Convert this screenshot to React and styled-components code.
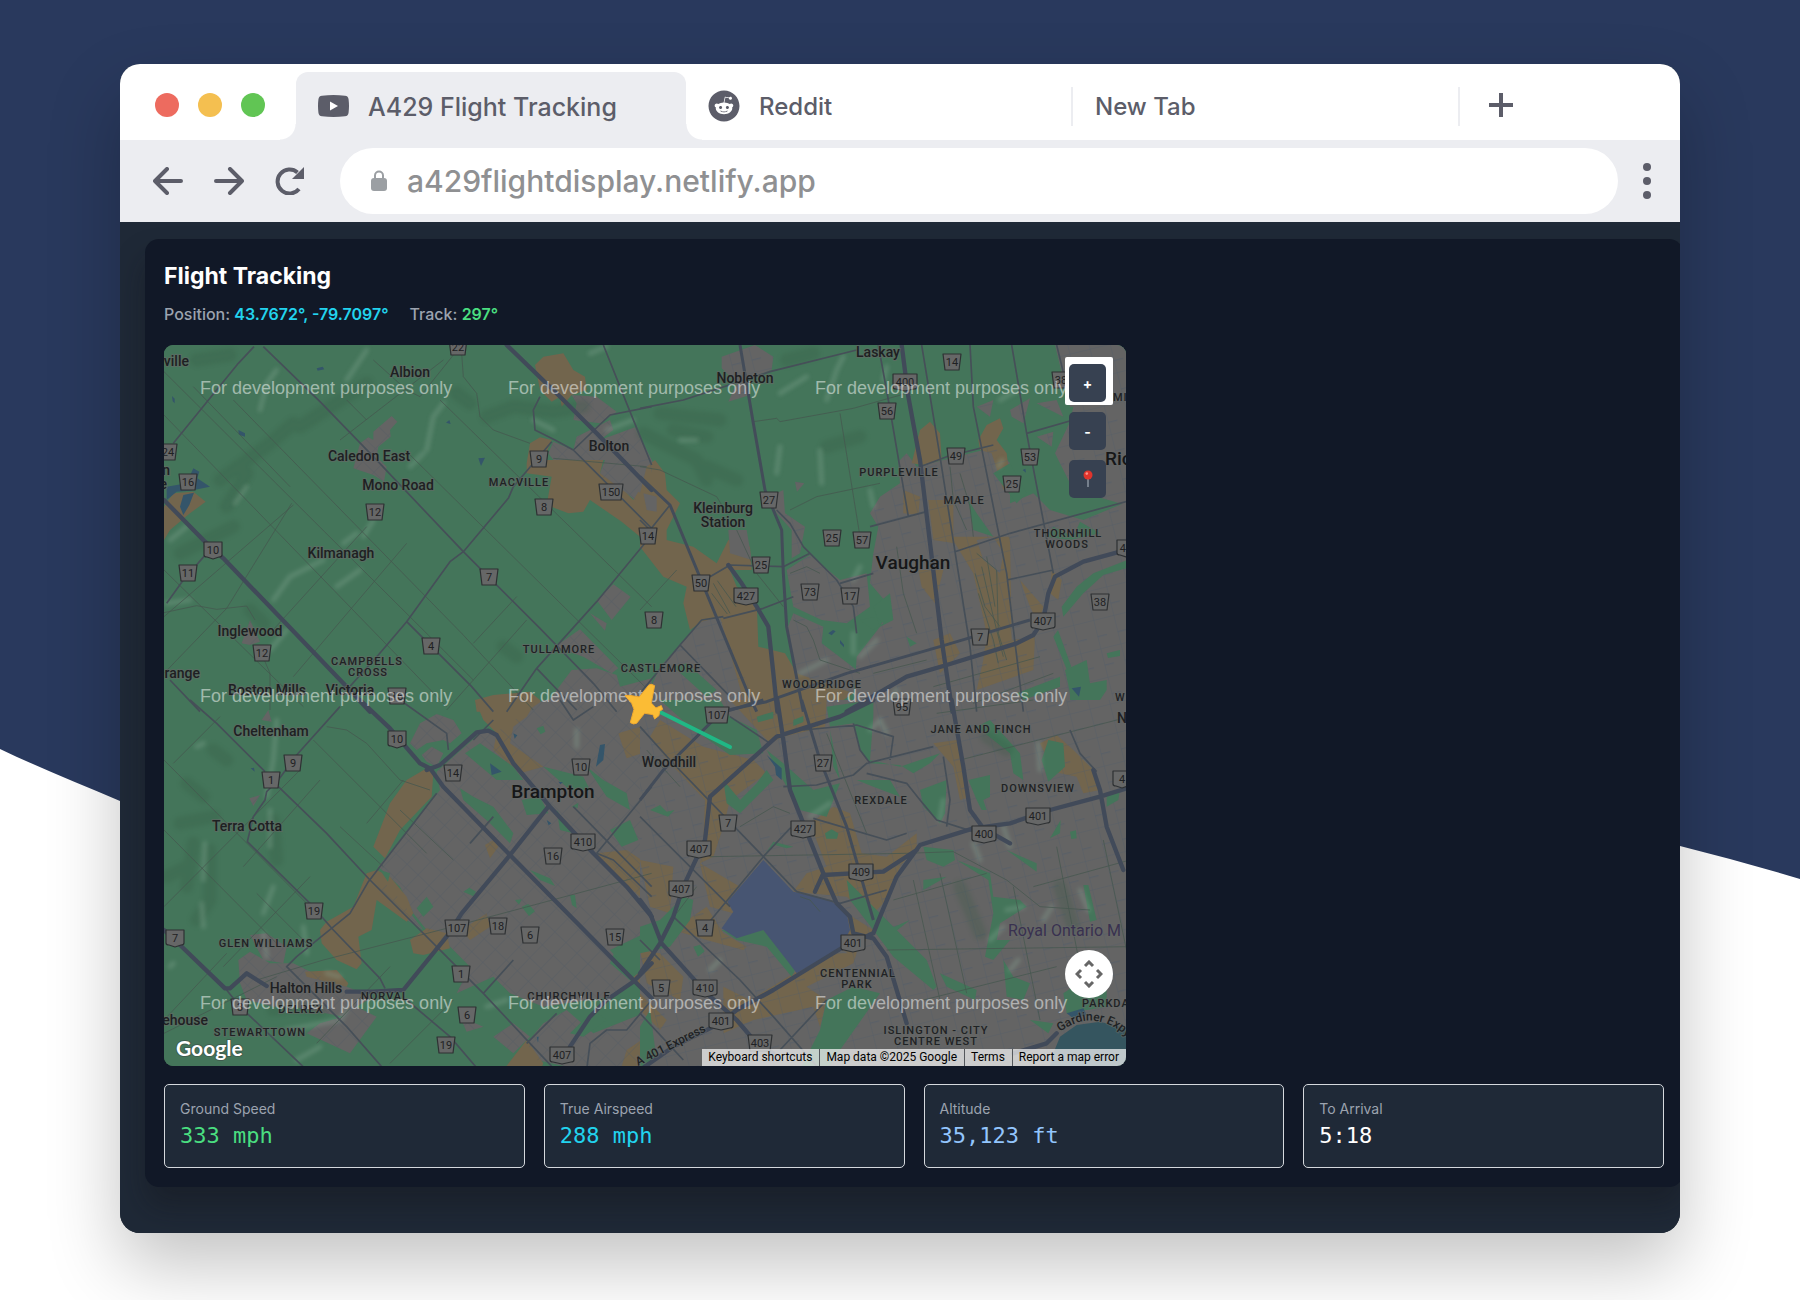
import React from "react";
import styled, { createGlobalStyle } from "styled-components";
import { FaReddit } from "react-icons/fa";

const GlobalStyle = createGlobalStyle`
  *, *::before, *::after { box-sizing: border-box; }
  body { margin: 0; background: #ffffff; font-family: Inter, "Liberation Sans", sans-serif; }
  button, input { font: inherit; border: 0; margin: 0; padding: 0; background: none; color: inherit; }
  h1, dl, dd, dt, p { margin: 0; }
`;

const ink = "#5c5d69";
const chrome = "#ecedf1";

/* ---------- page and window ---------- */

const Page = styled.div`
  position: relative;
  min-height: 100vh;
  padding: 64px 120px 66px;
  overflow: hidden;
`;

const Wave = styled.svg`
  position: absolute;
  inset: 0;
  width: 100%;
  height: 100%;
`;

const Window = styled.main`
  position: relative;
  border-radius: 20px;
  overflow: hidden;
  background: #1f2937;
  box-shadow: 0 32px 72px rgba(0, 0, 0, 0.24);
`;

const TabBar = styled.header`
  display: flex;
  align-items: flex-end;
  height: 76px;
  background: #ffffff;
`;

const Lights = styled.div`
  display: flex;
  align-self: center;
  gap: 19px;
  padding: 6px 31px 0 35px;
`;

const Light = styled.button`
  width: 24px;
  height: 24px;
  border-radius: 50%;
  background: ${(p) => p.$color};
`;

const Tabs = styled.div`
  display: flex;
  flex: 0 1 1164px;
  min-width: 0;
`;

const Tab = styled.button`
  position: relative;
  display: flex;
  align-items: center;
  gap: 19px;
  flex: 0 1 ${(p) => (p.$active ? "390px" : "387px")};
  height: 68px;
  padding: 0 22px;
  font-size: ${(p) => (p.$active ? "25px" : "24px")};
  font-weight: 500;
  line-height: 32px;
  white-space: nowrap;
  color: ${ink};
  background: ${(p) => (p.$active ? chrome : "transparent")};
  border-radius: 12px 12px 0 0;

  &::before {
    content: "";
    position: absolute;
    display: ${(p) => (p.$active ? "block" : "none")};
    left: -16px;
    right: -16px;
    bottom: 0;
    height: 16px;
    background:
      radial-gradient(circle at 0 0, transparent 15px, ${chrome} 16px) left / 16px 16px no-repeat,
      radial-gradient(circle at 100% 0, transparent 15px, ${chrome} 16px) right / 16px 16px no-repeat;
  }

  &::after {
    content: "";
    position: absolute;
    display: ${(p) => (p.$divided ? "block" : "none")};
    right: 0;
    top: 15px;
    width: 2px;
    height: 39px;
    background: ${chrome};
  }
`;

const TabTitle = styled.span`
  padding-top: 2px;
`;

const IconButton = styled.button`
  display: grid;
  place-items: center;
  flex: none;
  width: 30px;
  height: 36px;
  color: ${ink};
`;

const NewTabButton = styled(IconButton)`
  align-self: center;
  margin: 6px 0 0 26px;
`;

const Toolbar = styled.nav`
  display: flex;
  align-items: center;
  gap: 31px;
  height: 82px;
  padding: 0 18px 0 33px;
  background: ${chrome};
`;

const AddressGroup = styled.div`
  display: flex;
  align-items: center;
  flex: 1;
  gap: 14px;
  padding-left: 4px;
`;

const AddressBar = styled.label`
  display: flex;
  align-items: center;
  flex: 1;
  gap: 20px;
  height: 66px;
  padding: 0 31px;
  border-radius: 33px;
  background: #ffffff;
`;

const AddressInput = styled.input`
  flex: 1;
  min-width: 0;
  height: 40px;
  font-size: 30px;
  font-weight: 500;
  color: #8f9092;
  outline: none;
`;

/* ---------- flight panel ---------- */

const Viewport = styled.div`
  padding: 17px 0 46px 25px;
  background: #1f2937;
`;

const Panel = styled.section`
  margin-right: -3px;
  padding: 21px 19px 19px;
  border-radius: 14px;
  background: #111827;
  box-shadow: 0 20px 30px rgba(17, 17, 20, 0.35);
`;

const Title = styled.h1`
  font-size: 23px;
  line-height: 32px;
  font-weight: 700;
  color: #ffffff;
`;

const Readouts = styled.div`
  display: flex;
  gap: 21px;
  margin-top: 10px;
  font-size: 16px;
  font-weight: 500;
  line-height: 24px;
  color: #9ca3af;
`;

const Reading = styled.span`
  font-weight: 600;
  color: ${(p) => p.$color};
`;

const MapFrame = styled.div`
  position: relative;
  max-width: 962px;
  aspect-ratio: 962 / 721;
  margin-top: 19px;
  border-radius: 9px;
  overflow: hidden;
  background: #44755a;
`;

const MapDrawing = styled.svg`
  display: block;
  width: 100%;
  height: 100%;
`;

const ZoomStack = styled.div`
  position: absolute;
  top: 12px;
  right: 13px;
  display: flex;
  flex-direction: column;
  width: 48px;
`;

const ControlSlot = styled.div`
  height: 48px;
  padding: 7px 7px 3px 4px;
  border-radius: 2px;
  background: ${(p) => (p.$lit ? "#ffffff" : "transparent")};
`;

const MapButton = styled.button`
  display: grid;
  place-items: center;
  width: 37px;
  height: 38px;
  border-radius: 5px;
  background: #374151;
  color: #ffffff;
  font-size: 14px;
  font-weight: 700;
`;

const CameraButton = styled.button`
  position: absolute;
  right: 13px;
  bottom: 68px;
  display: grid;
  place-items: center;
  width: 48px;
  height: 48px;
  border-radius: 50%;
  background: #ffffff;
  color: #666666;
`;

const Attribution = styled.div`
  position: absolute;
  right: 0;
  bottom: 0;
  display: flex;
  height: 17px;
  font-family: Roboto, "Liberation Sans", sans-serif;
  font-size: 12px;
  line-height: 17px;
  color: #000000;
`;

const Credit = styled.a`
  padding: 0 7px 0 6px;
  white-space: nowrap;
  color: inherit;
  text-decoration: none;
  background: rgba(245, 245, 245, 0.72);

  & + & { border-left: 1px solid #55585c; }
`;

const Stats = styled.dl`
  display: grid;
  grid-template-columns: repeat(4, 1fr);
  gap: 19px;
  margin-top: 18px;
`;

const Stat = styled.div`
  min-height: 84px;
  padding: 14px 15px;
  border: 1px solid #d5d8dd;
  border-radius: 5px;
  background: #1f2937;
`;

const StatLabel = styled.dt`
  font-size: 14px;
  line-height: 20px;
  color: #9ca3af;
`;

const StatValue = styled.dd`
  margin-top: 3px;
  font-family: "DejaVu Sans Mono", monospace;
  font-size: 22px;
  line-height: 28px;
  color: ${(p) => p.$color};
`;

/* ---------- map data: the map is drawn as four tiles at triple scale ---------- */

const tiles = [
  {
    at: [-4, -5],
    grid: "url(#gridWest)",
    urban: [
      "M580 385L600 310L625 292L640 300V275L695 228L712 245L690 270L692 290L655 320L650 350L680 380L672 425L640 405Z",
      "M1235 165L1310 170L1370 215L1320 250L1240 240L1250 190Z",
      "M1250 290L1350 240L1360 270L1320 300L1425 262L1475 370V480L1450 455L1425 480L1400 460L1340 440L1320 400L1335 360H1180L1165 340L1180 305L1240 330Z",
      "M1310 780L1360 733L1412 770L1355 840Z", "M1290 820L1340 850L1335 872Z",
      "M1185 920L1260 868L1375 985L1355 1000L1270 950Z",
      "M1145 1110L1235 990L1310 985L1370 1005L1380 1040L1475 1015V1115Z",
      "M245 910L270 840L300 905L270 915Z",
    ],
    industry: [
      "M1125 75L1150 50L1210 40L1240 90L1275 110L1280 150L1235 165L1205 200L1200 170L1175 185L1140 150Z",
      "M1100 370L1110 310L1140 292L1175 300L1150 360H1330L1320 400L1400 460L1420 480L1435 455L1475 480V650L1440 590L1385 545L1290 480L1270 515L1225 520L1160 495L1175 410L1100 400Z",
      "M12 600V500L40 460L100 455L137 485L90 520L30 570Z",
      "M945 1080L1000 1065L1110 1055L1140 1080L1145 1115H950Z",
    ],
    parks: [],
    water: [
      "M20 440L80 430L100 385L118 395L112 415L150 440L90 452L50 455L20 480Z", "M60 500L70 465L102 458L88 495L70 525Z",
      "M470 85l18-5 5 8-20 4z", "M235 270l20 10v10l-18-6z", "M955 355l20-2-12 25z", "M36 168l8 8 0 14-6-6z", "M858 248l10-8 4 12z",
    ],
    relief: [
      "M300 210L320 130L350 90", "M800 330L820 230L850 190", "M340 780L390 710L490 660", "M530 740L600 690", "M610 590L640 540",
      "M560 120L620 30", "M1120 240L1180 270", "M1340 270L1420 240", "M20 790L90 780", "M330 930L380 870", "M225 490L260 440",
      "M1290 40L1340 20", "M750 380L790 340", "M30 600L80 560", "M550 610L590 580",
    ],
    shade: [
      "M980 230L1060 200L1180 215L1270 200", "M180 420L330 310L400 250", "M200 500L260 400", "M110 60L210 45", "M420 260L620 130",
      "M60 640L220 560", "M270 810L310 850", "M890 160L930 190", "M1030 920L1070 950",
    ],
    highways: ["M12 480L135 605L190 655L560 1040L630 1115", "M1040 15L1195 165L1310 280L1475 450"],
    roads: [
      "M310 20L480 185L640 350L910 635L990 715L1140 865L1300 1030L1370 1115", "M282 20L235 70L40 310",
      "M1175 305L1060 440L1045 475L910 635L870 665L740 845L655 945L560 1050", "M740 845L935 1040L1000 1115",
      "M1140 170L1120 210L1125 270L1185 300L1240 330L1320 410L1475 565", "M1240 330L1350 225L1475 200", "M1330 15L1400 190L1475 375",
      "M1475 585L1310 785L1130 985L1040 1115", "M20 790L70 720L140 640", "M30 1020L120 1115", "M1130 985L1250 1110",
    ],
    lanes: [
      "M12 225L860 1100", "M12 95L940 1020", "M220 180L905 880L1120 1110", "M560 180L620 240M735 330L1475 1060", "M840 180L1475 800",
      "M12 690L430 1100", "M12 830L400 495", "M200 805L395 490", "M400 1010L740 610", "M330 880L620 560", "M12 1000L200 805",
      "M540 300L850 60", "M940 910L1070 770", "M860 1110L1100 840", "M640 60L740 150L780 170L900 20", "M905 40L910 110L950 160L960 230L1000 270L1110 310",
      "M12 818L110 797L170 808L260 798L285 840", "M1180 355L1460 380", "M300 930L330 1000V1110", "M100 140L390 440",
    ],
  },
  {
    at: [476, -5],
    grid: "url(#gridEast)",
    urban: [
      "M690 520L720 470L780 430L775 365L800 340L830 380L1030 330L1060 310L1110 370V490L1180 460L1230 510L1330 540L1475 480V1115H640L650 950L720 860L750 800L690 730L700 640L715 560Z",
      "M1245 340L1290 245L1300 200L1475 190V500L1300 450Z", "M1245 15H1475V200H1290Z",
      "M245 50L345 15L400 50L395 90L310 120L330 165L265 185L290 130L245 85Z",
      "M1110 210L1170 175L1150 250L1115 230Z", "M1190 190L1250 180L1270 230Z", "M1010 200L1060 180L1050 230Z", "M1190 290L1240 275L1235 320Z",
      "M385 470L430 450L435 520L495 560L480 640L455 655V570L410 520Z",
      "M440 690L510 645L600 720L680 700L690 800L620 850L545 840L460 800Z", "M465 425l28 5-22 25z",
      "M440 870L460 820L550 860L545 910L650 990L640 1060L470 1010Z",
      "M0 290L40 370L30 430L0 410Z", "M0 1115L60 980L120 915L185 840L240 830L330 1050V1115Z",
    ],
    industry: [
      "M0 460L20 380L45 360L75 400L80 450L120 490L80 570V600L160 620L230 670L265 600L330 620L335 690L270 690L290 740L350 780L355 920L435 940L470 1000L640 1060L560 1115H320L240 830L185 845L150 870L130 790L140 740L70 710L0 620Z",
      "M815 370L840 270L870 245L900 280L905 360L850 375Z",
      "M1015 300L1040 255L1080 235L1090 265L1070 300L1100 340L1110 420L1090 450L1055 340L1020 330Z",
      "M865 480L940 480V590L1020 590L1110 590L1115 900L1185 890L1180 990L1010 1050L1030 960L1040 880L1000 700L945 610L880 600Z",
      "M835 690L910 690L885 790L845 740Z", "M880 900L930 880L960 940L900 1000Z", "M1235 690L1265 720L1255 780L1230 760Z",
      "M1140 720L1210 800L1195 850L1170 800Z", "M790 450L840 470L835 525L790 520Z",
    ],
    urbanOver: ["M10 460L50 470L50 515L20 510Z", "M265 570L320 570L335 660L270 640Z", "M1010 600L1060 590L1090 640L1080 700L1030 660Z"],
    parks: [
      "M1275 990L1340 960L1350 1030L1400 1020V1050L1360 1110H1290V1060Z", "M1265 800L1310 740L1360 700L1475 655V680L1390 705L1330 760L1270 830Z",
      "M1240 890l14-20 40 110-14 8z", "M985 480L1010 520L1060 590L1000 570Z", "M1240 560L1300 590L1320 545L1380 580L1290 600L1220 590Z",
      "M700 800l20 60 40-20-10-80z", "M800 890l30 20-20 10z", "M1130 1060L1260 1010V1040L1150 1080Z", "M100 980L140 970L230 1050L200 1070Z",
      "M1400 940l40-10v18l-36 6z", "M660 840L710 830L730 850L700 870Z", "M1110 370L1160 460L1130 490L1060 400Z",
    ],
    water: ["M565 880l14-10 8 4-12 12z", "M1295 1045l28-5-6 30z", "M600 900l12 14 0 8-12-12z", "M1148 390l8-4 2 12z"],
    relief: [
      "M560 180L590 90L610 50", "M420 320L410 400", "M540 330L545 430", "M420 160L500 110", "M640 720L660 680", "M640 940L640 880",
      "M660 950L710 900", "M480 1000L560 960", "M690 450L700 500", "M730 120L740 80", "M1080 180L1130 150", "M120 300L170 300",
      "M740 1100L770 1050", "M1075 380l12-18",
    ],
    shade: ["M10 280L90 320L170 360L200 420", "M60 220L240 240", "M200 380L290 420", "M440 60L520 40", "M100 270L200 290", "M560 320L660 290"],
    highways: [
      "M785 15L805 170L840 360L875 650L905 900L937 1115", "M265 675L305 730L350 800L385 860L400 1000L412 1115",
      "M1475 625L1330 665L1245 710L1225 760L1210 840L1180 885L1130 910L920 975L800 1010L620 1115",
    ],
    arterials: [
      "M0 410L90 495L320 1050L350 1115", "M300 15L340 250L375 450L400 510L425 570L430 700L440 860L490 1115",
      "M240 1115L380 1085L620 1000L900 920L1170 840",
    ],
    roads: [
      "M845 15L900 350L990 920L1010 1115", "M715 15L745 180L805 530", "M990 15L1000 200L1040 400L1100 700L1150 1115", "M1115 15L1160 280L1240 700",
      "M1250 15L1290 180", "M0 205L130 180L390 95L650 30", "M945 635L1110 580L1475 480", "M840 380L920 350L1060 315",
      "M410 510L450 550L490 620L590 720L640 800L650 880", "M210 710L270 675L430 680L510 640", "M250 835L370 805L460 770", "M600 730L700 700",
      "M1160 280L1300 240", "M0 1060L120 915L185 840L250 830", "M1100 720L1240 690", "M120 915L270 1070", "M0 540L30 570M30 570L90 495", "M690 560L860 515",
    ],
    lanes: [
      "M340 245L410 235L420 245L640 205L800 160", "M0 380L60 390L230 470L260 520", "M450 510L530 470L720 430", "M600 220L660 590",
      "M290 570L350 700L430 800", "M0 810L110 690", "M220 730L270 820M232 722L288 800M215 760L262 822",
      "M1010 640L1070 690L1075 880L1100 960M1025 680L1060 830L1090 950M1005 700L1035 800L1080 860M1040 650L1065 800M1015 760L1060 900L1075 970",
      "M460 840L500 860L520 900L540 960L660 1000", "M450 700L500 680L540 700", "M700 1000L860 960M880 1040L1200 950M1000 1090L1240 1000",
      "M930 380L940 480L980 570", "M960 400L990 500L1000 590", "M770 620L790 760L830 880",
    ],
  },
  {
    at: [-4, 355],
    grid: "url(#gridWest)",
    urban: [
      "M750 130L780 70L830 42L880 60L905 100L870 130L850 120L800 130L770 150Z",
      "M655 500L840 270L830 215L960 100L1010 95L1150 0H1475V700L1370 740L1350 790L1420 850L1350 890L1150 920L1050 880L1000 830L890 880L930 800L860 730L800 690L760 640L720 560Z",
      "M635 535L690 560L790 690L740 660Z", "M785 165L815 140L850 160L830 200L800 185Z",
      "M235 780L270 755L330 790L400 790L440 810L560 860L640 890L590 920L650 950L570 1060L440 1000L480 970L550 950L400 920L340 920L260 900L240 850Z",
      "M270 705L320 700L380 740L370 790L310 780Z", "M305 60L325 30L335 65Z", "M268 295L300 285L280 318Z",
      "M1150 970L1220 930L1300 1000L1475 930V1115H1290L1130 1080L1100 1030Z", "M1000 1010L1060 970L1110 1010L1060 1060Z", "M900 950L970 980L920 995Z",
    ],
    industry: [
      "M640 440L690 310L740 240L800 205L820 220L815 290L720 390L675 475Z",
      "M480 690L500 665L580 620L620 520L650 510L690 530L740 590L760 640L740 665L650 600L635 690L595 710L605 790L590 808L530 780L485 730Z",
      "M750 720L800 685L860 700L870 745L790 765L760 760Z", "M905 690L980 640L990 680L930 720Z",
      "M945 0H1130L1100 50L1060 80L1050 130L1150 200L1080 220L1000 150L1010 100L970 60Z", "M975 435L1000 420L1015 440L990 475Z",
      "M1310 460L1400 450L1475 500V640L1440 590L1330 490Z", "M1375 100L1475 70V150L1400 175Z", "M1420 830L1475 790V900Z",
      "M435 815L530 810L565 850L560 860L440 830Z", "M1030 1110L1100 1020L1150 1090L1140 1115Z", "M1400 1050L1475 1000V1115H1380Z",
    ],
    parks: [
      "M900 265L940 290L1000 320L1060 400L1050 430L990 370L910 300Z", "M915 160L960 130L1060 200L1090 240L1010 240Z",
      "M1085 300L1140 290L1165 340L1100 345Z", "M1280 200L1330 240L1400 280L1410 330L1340 290Z", "M1110 510L1170 535L1185 558L1140 540Z",
      "M1190 330L1240 400L1200 390Z", "M770 625L800 590L820 620L790 650Z", "M1350 750L1475 690V780L1420 830Z", "M1085 620l20-8 20 22-18 14z",
      "M1350 390l60-30 25 60-50 20z", "M1230 585l15 0 5 40-14-10z", "M1235 320l20-12-2 16z", "M1150 200L1230 270L1290 270L1270 230L1190 210Z",
      "M1065 600l20-2-8 16z", "M910 575l18-12 20 12-8 14z", "M660 510L690 520L684 545Z", "M1130 85l20-8 6 18-14 8z", "M1230 1000L1300 930L1340 960L1270 1010Z",
    ],
    water: ["M1320 135l15-3-5 48-22 20z", "M990 190l35 25-30 10z", "M1060 100l12 6-8 10z", "M1160 360l14 10-8 6z", "M1130 1010l6 0-2 18z", "M272 205l10-2 2 12z", "M1195 245l14 2-8 6z"],
    relief: [
      "M350 60L340 180L320 290", "M330 330L330 440", "M135 430L130 540", "M340 560L310 640", "M430 680L440 760", "M125 610L130 680",
      "M310 700L320 770", "M380 990L540 960L560 930", "M110 140L130 130", "M980 920L1040 900", "M30 800L40 790", "M1250 90L1250 140",
      "M500 820L540 830", "M410 1080L480 1040",
    ],
    shade: ["M60 370L160 350", "M100 430L80 560", "M20 530L80 500", "M160 150L200 180", "M150 450L150 600L110 660", "M80 250L130 290", "M340 360L350 480", "M340 930L390 920L480 930"],
    highways: [
      "M600 0L690 85L780 190L810 205L850 260L1050 465L1420 840L1475 895",
      "M800 210L840 195L950 97L985 92L1010 105L1060 190L1170 320L1300 460L1400 560L1475 650",
      "M1165 320L1050 465L905 640L860 710L730 870L640 875H560", "M320 858L260 820L210 865H195L60 735L12 690",
      "M1475 790L1420 845L1340 900L1290 950L1230 1040",
    ],
    roads: [
      "M540 20L410 165L355 240L320 275L315 300L280 350L262 425L450 610L520 690L660 835L675 865", "M90 0L170 70L315 215",
      "M355 260L500 400L630 540L780 690L880 790L970 880L1110 1030L1190 1115", "M830 280L625 545L570 640L410 770L380 800L560 980L665 1100",
      "M200 870L240 920L440 1110", "M740 900L870 1010L960 1115", "M1475 260L1310 460", "M970 880L1060 780", "M1100 1030L1190 940",
      "M720 0L860 100L865 150", "M1000 60L940 120M1200 0L1240 60L1300 20", "M1280 1110L1290 1030L1340 990L1400 990L1475 900",
      "M930 430L1000 350", "M1310 460L1360 480L1475 590", "M1240 320L1475 560",
    ],
    lanes: [
      "M12 180L440 610", "M460 120L800 460", "M12 390L350 730", "M290 580L450 740", "M12 620L420 210", "M190 800L450 530", "M500 80L560 90L620 130L720 240L810 270",
      "M290 840L490 780L860 685L1140 610L1475 520", "M40 190L180 50", "M250 500L480 240", "M620 370L730 240", "M12 960L200 760", "M720 330L880 480",
      "M470 1030L690 800", "M690 1090L880 900", "M12 1000L350 830", "M540 380L670 500",
    ],
  },
  {
    at: [476, 355],
    grid: "url(#gridEast)",
    urban: ["M0 0H1475V1115H0Z"],
    industry: [
      "M130 0H560L555 80L430 110L390 130L270 0Z", "M60 60L190 140L340 180L380 220L270 300L250 380L220 470L180 490L190 420L195 300L90 190L30 110Z",
      "M0 480L100 500L90 640L30 620Z", "M100 690L200 620L250 700L320 740L310 750L200 720Z", "M0 750L60 760L130 830L120 900L20 850Z",
      "M510 370L580 320L630 340L665 460L740 470L830 400V440L780 500L740 600L690 650L620 590L460 575L500 520L560 500Z",
      "M250 860L330 900L560 760L650 760L640 790L500 860L560 900L540 980L520 920L340 960L250 1000Z",
      "M1200 130L1250 105L1300 150L1360 210L1380 270L1330 280L1310 230L1240 215Z", "M880 130L950 120L970 200L990 290L960 300L940 200Z",
      "M180 490L300 560L262 605L280 640L210 620Z", "M0 880L80 960L60 990L0 930Z", "M620 640L700 690L640 770L600 745L630 690Z",
    ],
    parks: [
      "M60 0H240L270 50L350 90L370 160L270 165L150 80Z", "M250 240L300 300L350 250L380 210L400 240L300 340L260 310Z",
      "M380 150L430 190L520 270L600 250L560 350L480 330L440 260Z", "M560 20L700 0V50L690 180L780 200L900 160L870 190L820 220L780 195L690 190L660 150L640 70L570 80Z",
      "M650 240L750 240L780 290L700 260Z", "M840 270L920 240L915 340L900 370L850 320Z", "M850 440L940 450L945 480L910 500L860 480Z",
      "M985 240L1050 225V290L1030 300L1040 330H1025L1010 300Z", "M1010 80L1050 60L1140 160L1150 240L1120 220L1110 160Z",
      "M950 480L1050 520L1060 590L1140 600L1160 620L1080 670L1070 720L1110 720L1060 780L1035 770L1060 640L1045 540Z",
      "M1090 780L1120 830L1170 850L1150 900L1100 890Z", "M1330 555H1345L1370 660L1350 665Z",
      "M620 540L740 660L860 780L890 860L880 870L760 770L700 690L630 600Z", "M900 820L1010 870L1005 900L920 860Z",
      "M0 680L60 660L130 590L160 600L150 660L90 740L0 760Z", "M245 690L370 690L470 800L455 830L380 740L290 720Z",
      "M560 900L640 860L720 880L600 1050L560 1110H480L540 990Z", "M1270 880L1330 840L1400 870V920L1280 940Z", "M0 980L30 930L50 1080L0 1110Z",
      "M1205 180L1225 120L1270 130L1275 200L1225 245Z", "M555 400l20-12 20 12-4 16h-32z", "M850 540L920 530L850 570Z", "M370 470L400 425L460 440L440 445L405 435Z",
      "M30 330l30-15 20 20 24-5-20 20z", "M160 740l20-6 14 20-20 16z", "M1290 395l18-4 2 24-16 2z", "M1230 415L1262 360L1260 400Z", "M350 50l50-15 0 20-46 12z", "M460 60l30-12 0 18-30 12z",
      "M1170 960L1240 970L1225 1000Z", "M1100 450L1190 490V515Z", "M740 690L810 660L760 700Z", "M1400 290l40-20-5 30-35 20z", "M570 90L590 190L600 240L580 200Z",
    ],
    airport: "M370 480L460 575L570 600L620 640L630 690L600 745L470 820L440 780L370 690L290 715L245 685L280 635L262 605Z",
    lake: "M1225 1115L1240 1060L1260 1010L1310 975L1380 965L1475 990V1115Z",
    water: ["M380 165L425 205V240L408 225L405 200Z", "M1280 940l50-15 10 20-40 10z"],
    relief: [
      "M690 90L720 60L740 100", "M510 350L570 310", "M900 360L910 300", "M1195 130L1200 210", "M1320 570L1345 630", "M1210 660L1235 620",
      "M1050 720L1090 680", "M1110 810L1135 780", "M1100 630L1150 620", "M1000 430L1020 480", "M1090 380L1110 440", "M210 810L240 780",
    ],
    shade: ["M960 560L1020 700", "M1260 560L1300 680", "M1040 110L1100 150"],
    highways: [
      "M412 0L430 120L450 270L490 370L550 520L590 610L630 650L640 700L700 715L740 770L800 970", "M935 0L970 200L990 330L1030 385L1110 430",
      "M700 0L600 50L410 110L210 290L195 420L130 560L100 650L60 730L0 820", "M0 600L30 640L65 730L200 880L290 960L350 1030L400 1060",
      "M1475 260L1380 290L1230 330L1110 370L1000 385L840 435L770 530L720 650L700 700L620 735L400 870L290 930L240 970L100 1040L0 1110",
      "M550 525L730 515L830 450", "M550 520L525 575", "M1360 210L1380 270L1400 380L1450 510", "M1120 1060L1220 1030L1250 1000",
    ],
    arterials: ["M485 0L540 180L620 380L700 660", "M0 300L70 210L240 40L370 0"],
    roads: [
      "M0 80L90 180L370 470L470 575L600 610L740 570", "M0 350L150 500L270 620", "M430 260L530 255L640 225L680 190L880 140", "M490 90L650 75L760 110L750 180",
      "M680 220L800 250L840 300L890 360L1000 395", "M180 700L370 470L450 385L500 370", "M520 355L740 420L800 400", "M100 650L300 840L400 950L540 1110",
      "M420 1050L560 900", "M640 70L660 150L690 190", "M1290 90L1320 160L1370 215", "M0 940L130 1080", "M270 50L390 130", "M0 720L60 780", "M910 170L930 300L920 380",
    ],
    lanes: [
      "M210 470L800 460L940 455L1100 540L1200 620L1350 630", "M480 590L510 600L540 635", "M740 750L1470 740", "M890 40L1180 0M960 180L1470 50",
      "M560 100L680 400M820 540L900 900M900 520L980 880M1120 560L1200 960M1250 440L1340 900M1390 420L1470 800", "M20 150L120 260", "M110 640L170 560",
      "M850 900L1250 800M760 600L1040 520M1180 560L1470 480", "M300 380L400 320L450 340",
    ],
  },
];

/* [text, x, baseline, kind, anchor] */
const places = [
  ["ville", 25, 21, "town", "end"], ["Albion", 246, 32, "town"], ["Caledon East", 205, 116, "town"], ["Mono Road", 234, 145, "town"],
  ["Kilmanagh", 177, 213, "town"], ["MACVILLE", 355, 141, "area"], ["Bolton", 445, 106, "town"], ["Inglewood", 86, 291, "town"],
  ["CAMPBELLS", 203, 320, "area"], ["CROSS", 204, 331, "area"], ["range", 36, 333, "town", "end"], ["Boston Mills", 103, 350, "town"],
  ["Victoria", 186, 350, "town"], ["TULLAMORE", 395, 308, "area"], ["CASTLEMORE", 497, 327, "area"], ["n", 6, 130, "town", "end"], ["e", 3, 144, "town", "end"],
  ["Nobleton", 581, 38, "town"], ["Laskay", 714, 12, "town"], ["Kleinburg", 559, 168, "town"], ["Station", 559, 182, "town"],
  ["PURPLEVILLE", 735, 131, "area"], ["MAPLE", 800, 159, "area"], ["THORNHILL", 904, 192, "area"], ["WOODS", 903, 203, "area"],
  ["Vaughan", 749, 224, "city"], ["Ric", 941, 120, "city", "start"], ["WOODBRIDGE", 658, 343, "area"], ["W", 951, 356, "area", "start"],
  ["MIL", 949, 56, "area", "start"], ["Cheltenham", 107, 391, "town"], ["Terra Cotta", 83, 486, "town"], ["Brampton", 389, 453, "city"],
  ["GLEN WILLIAMS", 102, 602, "area"], ["Halton Hills", 142, 648, "town"], ["NORVAL", 221, 655, "area"], ["DELREX", 137, 668, "area"],
  ["ehouse", 44, 680, "town", "end"], ["STEWARTTOWN", 96, 691, "area"], ["CHURCHVILLE", 405, 655, "area"], ["Woodhill", 505, 422, "town"],
  ["JANE AND FINCH", 817, 388, "area"], ["N", 953, 378, "town", "start"], ["REXDALE", 717, 459, "area"], ["DOWNSVIEW", 874, 447, "area"],
  ["CENTENNIAL", 694, 632, "area"], ["PARK", 693, 643, "area"], ["ISLINGTON - CITY", 772, 689, "area"], ["CENTRE WEST", 772, 700, "area"],
  ["PARKDA", 918, 662, "area", "start"], ["Royal Ontario M", 844, 591, "poi", "start"],
];

/* [number, x, y, isHighway] */
const shields = [
  ["22", 294, 2], ["24", 4, 107], ["16", 24, 137], ["12", 211, 167], ["10", 49, 205, 1], ["11", 24, 228], ["9", 375, 114], ["8", 380, 162],
  ["150", 447, 147], ["14", 484, 191], ["7", 325, 232], ["4", 267, 301], ["12", 98, 308], ["8", 490, 275], ["16", 233, 351], ["14", 788, 17],
  ["400", 741, 37, 1], ["56", 723, 66], ["38", 897, 35], ["27", 605, 155], ["49", 792, 111], ["53", 866, 112], ["25", 848, 139], ["25", 668, 193],
  ["57", 698, 195], ["50", 537, 238], ["25", 597, 220], ["427", 582, 251, 1], ["73", 646, 247], ["17", 686, 251], ["407", 879, 276, 1],
  ["7", 816, 292], ["38", 936, 257], ["40", 962, 203, 1], ["9", 129, 418], ["1", 107, 435], ["10", 233, 394, 1], ["14", 289, 428], ["10", 417, 422],
  ["410", 419, 497, 1], ["16", 389, 511], ["19", 150, 566], ["7", 11, 593, 1], ["107", 293, 583], ["18", 334, 581], ["6", 366, 590], ["15", 451, 592],
  ["1", 297, 629], ["6", 303, 670], ["19", 282, 700], ["407", 398, 710, 1], ["3", 76, 662], ["107", 553, 370], ["95", 738, 362], ["27", 659, 418],
  ["7", 564, 478], ["427", 639, 484, 1], ["407", 535, 504, 1], ["407", 517, 544, 1], ["409", 697, 527, 1], ["401", 874, 471, 1], ["400", 820, 489, 1],
  ["4", 958, 434, 1], ["401", 689, 598, 1], ["4", 541, 583], ["5", 497, 643], ["410", 541, 643, 1], ["401", 557, 676, 1], ["403", 596, 698],
];

const labelStyles = {
  town: { size: 14, weight: 500, spacing: 0, fill: "#1e2022" },
  area: { size: 11, weight: 500, spacing: 1, fill: "#1f2224" },
  city: { size: 19, weight: 500, spacing: 0, fill: "#161718" },
  poi: { size: 16, weight: 400, spacing: 0, fill: "#393150" },
  street: { size: 12, weight: 500, spacing: 0, fill: "#1f2224" },
};

const MapText = styled.text`
  font-family: Roboto, "Liberation Sans", sans-serif;
  font-size: ${(p) => labelStyles[p.$kind].size}px;
  font-weight: ${(p) => labelStyles[p.$kind].weight};
  letter-spacing: ${(p) => labelStyles[p.$kind].spacing}px;
  fill: ${(p) => labelStyles[p.$kind].fill};
  stroke: rgba(100, 104, 102, 0.6);
  stroke-width: 2px;
  paint-order: stroke;
`;

const ShieldText = styled.text`
  font-family: Roboto, "Liberation Sans", sans-serif;
  font-size: 11px;
  font-weight: 400;
  fill: #1f2123;
`;

const Watermark = styled.text`
  font-family: "Liberation Sans", sans-serif;
  font-size: 18px;
  fill: rgba(255, 255, 255, 0.5);
`;

const Wordmark = styled.text`
  font-family: Lato, sans-serif;
  font-size: 21px;
  font-weight: 700;
  fill: #ffffff;
  stroke: rgba(60, 70, 66, 0.5);
  stroke-width: 2px;
  paint-order: stroke;
`;

const place = (tile) => `translate(${tile.at[0]} ${tile.at[1]}) scale(${1 / 3})`;
const join = (list) => (list || []).join("");

function Shield({ number, x, y, highway }) {
  const w = number.length > 2 ? 12 : 9;
  const d = highway
    ? `M${-w} -8H${w}V5Q${w} 7 ${w - 3} 7L0 9L${3 - w} 7Q${-w} 7 ${-w} 5Z`
    : `M${-w} -8H${w}L${w - 2} 8H${2 - w}Z`;
  return (
    <g transform={`translate(${x} ${y})`}>
      <path d={d} fill="#666767" stroke="#2e3133" strokeWidth="1.2" strokeLinejoin="round" />
      <ShieldText y="4" textAnchor="middle">{number}</ShieldText>
    </g>
  );
}

function FlightMap() {
  return (
    <MapDrawing viewBox="0 0 962 721" role="img" aria-label="Map of the flight position near Brampton">
      <defs>
        <pattern id="gridWest" width="46" height="54" patternUnits="userSpaceOnUse" patternTransform="rotate(44)">
          <path d="M0 0H46M0 0V54" stroke="#505a66" strokeWidth="3" fill="none" />
        </pattern>
        <pattern id="gridEast" width="62" height="88" patternUnits="userSpaceOnUse" patternTransform="rotate(-14)">
          <path d="M0 0H62M0 0V88M0 52H30" stroke="#4f5c6a" strokeWidth="3" fill="none" />
        </pattern>
        <filter id="soft" x="-10%" y="-10%" width="120%" height="120%"><feGaussianBlur stdDeviation="7" /></filter>
        <path id="gardiner" d="M896 687Q915 673 932 676Q948 678 962 691L980 706" />
      </defs>
      <rect width="962" height="721" fill="#44755a" />
      {tiles.map((t, i) => (
        <g key={i} transform={place(t)}>
          <path d={join(t.urban)} fill="#646464" />
          <path d={join(t.industry)} fill="#72654d" />
          <path d={join(t.urbanOver)} fill="#646464" />
          <path d={join(t.urban)} fill={t.grid} opacity="0.6" />
          <path d={join(t.parks)} fill="#44755a" />
          {t.airport && <path d={t.airport} fill="#475572" />}
          {t.lake && <path d={t.lake} fill="#35555f" />}
          <path d={join(t.water)} fill="#34556a" />
          <path d={join(t.shade)} fill="none" stroke="#33563f" strokeWidth="40" strokeLinecap="round" strokeLinejoin="round" opacity="0.22" filter="url(#soft)" />
          <path d={join(t.relief)} fill="none" stroke="#8fb09c" strokeWidth="14" strokeLinecap="round" opacity="0.32" filter="url(#soft)" />
        </g>
      ))}
      {tiles.map((t, i) => (
        <g key={i} transform={place(t)} fill="none" strokeLinejoin="round">
          <path d={join(t.lanes)} stroke="#45574f" strokeWidth="3" opacity="0.75" />
          <path d={join(t.roads)} stroke="#464f58" strokeWidth="5" />
          <path d={join(t.arterials)} stroke="#434c59" strokeWidth="9" />
          <path d={join(t.highways)} stroke="#414a59" strokeWidth="13" strokeLinecap="round" />
        </g>
      ))}
      {shields.map(([number, x, y, highway]) => (
        <Shield key={`${number}-${x}`} number={number} x={x} y={y} highway={highway} />
      ))}
      {places.map(([name, x, y, kind, anchor = "middle"]) => (
        <MapText key={`${name}-${x}`} x={x} y={y} $kind={kind} textAnchor={anchor}>{name}</MapText>
      ))}
      <MapText $kind="street"><textPath href="#gardiner">Gardiner Expy</textPath></MapText>
      <MapText $kind="street" transform="translate(474 721) rotate(-27)">A 401 Express</MapText>
      {[49, 357, 664].map((y) =>
        [36, 344, 651].map((x) => <Watermark key={`${x}-${y}`} x={x} y={y}>For development purposes only</Watermark>)
      )}
      <path d="M496 367L566 402" stroke="#20b885" strokeWidth="4" strokeLinecap="round" />
      <path
        transform="translate(436 315) scale(0.333)"
        d="M75 107L88 106L118 111L146 76Q152 69 164 77L154 129L168 144L184 137L188 148L179 154L177 167L164 177L159 164L134 160L110 190Q100 195 91 188L102 148L95 130Z"
        fill="#fbbc35" stroke="#f0a92f" strokeWidth="3" strokeLinejoin="round"
      />
      <Wordmark x="12" y="711">Google</Wordmark>
    </MapDrawing>
  );
}

/* ---------- icons ---------- */

const YouTubeIcon = () => (
  <svg width="31" height="22" viewBox="0 0 31 22" aria-hidden="true">
    <path d="M4 .7Q15.500-.5 27 .7Q30.300 1 30.600 4.500Q31.400 11 30.600 17.500Q30.300 21 27 21.300Q15.500 22.500 4 21.300Q.7 21 .4 17.500Q-.4 11 .4 4.500Q.7 1 4 .7Z" fill={ink} />
    <path d="M12 6.500V15.500L20 11Z" fill="#ffffff" />
  </svg>
);

const arrow = { width: 30, height: 28, viewBox: "0 0 30 28", fill: "none", stroke: ink, strokeWidth: 4, strokeLinecap: "round", strokeLinejoin: "round" };
const BackIcon = () => <svg {...arrow} aria-hidden="true"><path d="M14 2L2 14L14 26M2 14H28" /></svg>;
const ForwardIcon = () => <svg {...arrow} aria-hidden="true"><path d="M16 2L28 14L16 26M28 14H2" /></svg>;
const ReloadIcon = () => (
  <svg width="30" height="28" viewBox="0 0 30 28" aria-hidden="true">
    <path d="M24 22A12 12 0 1 1 22.500 5.500" fill="none" stroke={ink} strokeWidth="4" />
    <path d="M29 0V12H17Z" fill={ink} />
  </svg>
);
const LockIcon = () => (
  <svg width="16" height="22" viewBox="0 0 16 22" aria-hidden="true">
    <path d="M4 9V5.500A4 4 0 0 1 12 5.500V9" fill="none" stroke="#9b9fa3" strokeWidth="2" />
    <rect y="8" width="16" height="13" rx="3" fill="#9b9fa3" />
  </svg>
);
const PlusIcon = () => <svg width="24" height="24" viewBox="0 0 24 24" stroke={ink} strokeWidth="4" aria-hidden="true"><path d="M12 0V24M0 12H24" /></svg>;
const MenuIcon = () => (
  <svg width="8" height="36" viewBox="0 0 8 36" fill={ink} aria-hidden="true">
    <circle cx="4" cy="4" r="4" /><circle cx="4" cy="18" r="4" /><circle cx="4" cy="32" r="4" />
  </svg>
);
const PinIcon = () => (
  <svg width="10" height="18" viewBox="0 0 10 18" aria-hidden="true">
    <path d="M5 8V17" stroke="#8b95a0" strokeWidth="1.500" />
    <circle cx="5" cy="5" r="4.500" fill="#e0342c" /><circle cx="3.800" cy="3.600" r="1.300" fill="#ff8f86" />
  </svg>
);
const CameraIcon = () => (
  <svg width="28" height="28" viewBox="0 0 28 28" fill="none" stroke="currentColor" strokeWidth="3" aria-hidden="true">
    <path d="M10 6L14 2L18 6M22 10L26 14L22 18M18 22L14 26L10 22M6 18L2 14L6 10" />
  </svg>
);

const stats = [
  { label: "Ground Speed", value: "333 mph", color: "#4ade80" },
  { label: "True Airspeed", value: "288 mph", color: "#22d3ee" },
  { label: "Altitude", value: "35,123 ft", color: "#93c5fd" },
  { label: "To Arrival", value: "5:18", color: "#ffffff" },
];

export default function App() {
  return (
    <>
      <GlobalStyle />
      <Page>
        <Wave viewBox="0 0 1800 1300" preserveAspectRatio="none" aria-hidden="true">
          <path d="M0 0H1800V879C1760 867 1720 856 1680 846C1100 700 720 1060 120 801C80 784 40 768 0 749Z" fill="#29395d" />
        </Wave>
        <Window>
          <TabBar>
            <Lights>
              <Light $color="#ed6b5f" aria-label="Close" />
              <Light $color="#f4bf50" aria-label="Minimize" />
              <Light $color="#61c554" aria-label="Maximize" />
            </Lights>
            <Tabs role="tablist">
              <Tab $active role="tab" aria-selected="true"><YouTubeIcon /><TabTitle>A429 Flight Tracking</TabTitle></Tab>
              <Tab $divided role="tab" aria-selected="false"><FaReddit size={32} aria-hidden="true" /><TabTitle>Reddit</TabTitle></Tab>
              <Tab $divided role="tab" aria-selected="false"><TabTitle>New Tab</TabTitle></Tab>
            </Tabs>
            <NewTabButton aria-label="New tab"><PlusIcon /></NewTabButton>
          </TabBar>
          <Toolbar>
            <IconButton aria-label="Back"><BackIcon /></IconButton>
            <IconButton aria-label="Forward"><ForwardIcon /></IconButton>
            <IconButton aria-label="Reload"><ReloadIcon /></IconButton>
            <AddressGroup>
              <AddressBar>
                <LockIcon />
                <AddressInput aria-label="Address" defaultValue="a429flightdisplay.netlify.app" />
              </AddressBar>
              <IconButton aria-label="Menu"><MenuIcon /></IconButton>
            </AddressGroup>
          </Toolbar>
          <Viewport>
            <Panel>
              <Title>Flight Tracking</Title>
              <Readouts>
                <p>Position: <Reading $color="#22d3ee">43.7672°, -79.7097°</Reading></p>
                <p>Track: <Reading $color="#4ade80">297°</Reading></p>
              </Readouts>
              <MapFrame>
                <FlightMap />
                <ZoomStack>
                  <ControlSlot $lit><MapButton aria-label="Zoom in">+</MapButton></ControlSlot>
                  <ControlSlot><MapButton aria-label="Zoom out">-</MapButton></ControlSlot>
                  <ControlSlot><MapButton aria-label="Centre on aircraft"><PinIcon /></MapButton></ControlSlot>
                </ZoomStack>
                <CameraButton aria-label="Map camera controls"><CameraIcon /></CameraButton>
                <Attribution>
                  <Credit href="#shortcuts">Keyboard shortcuts</Credit>
                  <Credit href="#data">Map data ©2025 Google</Credit>
                  <Credit href="#terms">Terms</Credit>
                  <Credit href="#report">Report a map error</Credit>
                </Attribution>
              </MapFrame>
              <Stats>
                {stats.map((s) => (
                  <Stat key={s.label}>
                    <StatLabel>{s.label}</StatLabel>
                    <StatValue $color={s.color}>{s.value}</StatValue>
                  </Stat>
                ))}
              </Stats>
            </Panel>
          </Viewport>
        </Window>
      </Page>
    </>
  );
}
